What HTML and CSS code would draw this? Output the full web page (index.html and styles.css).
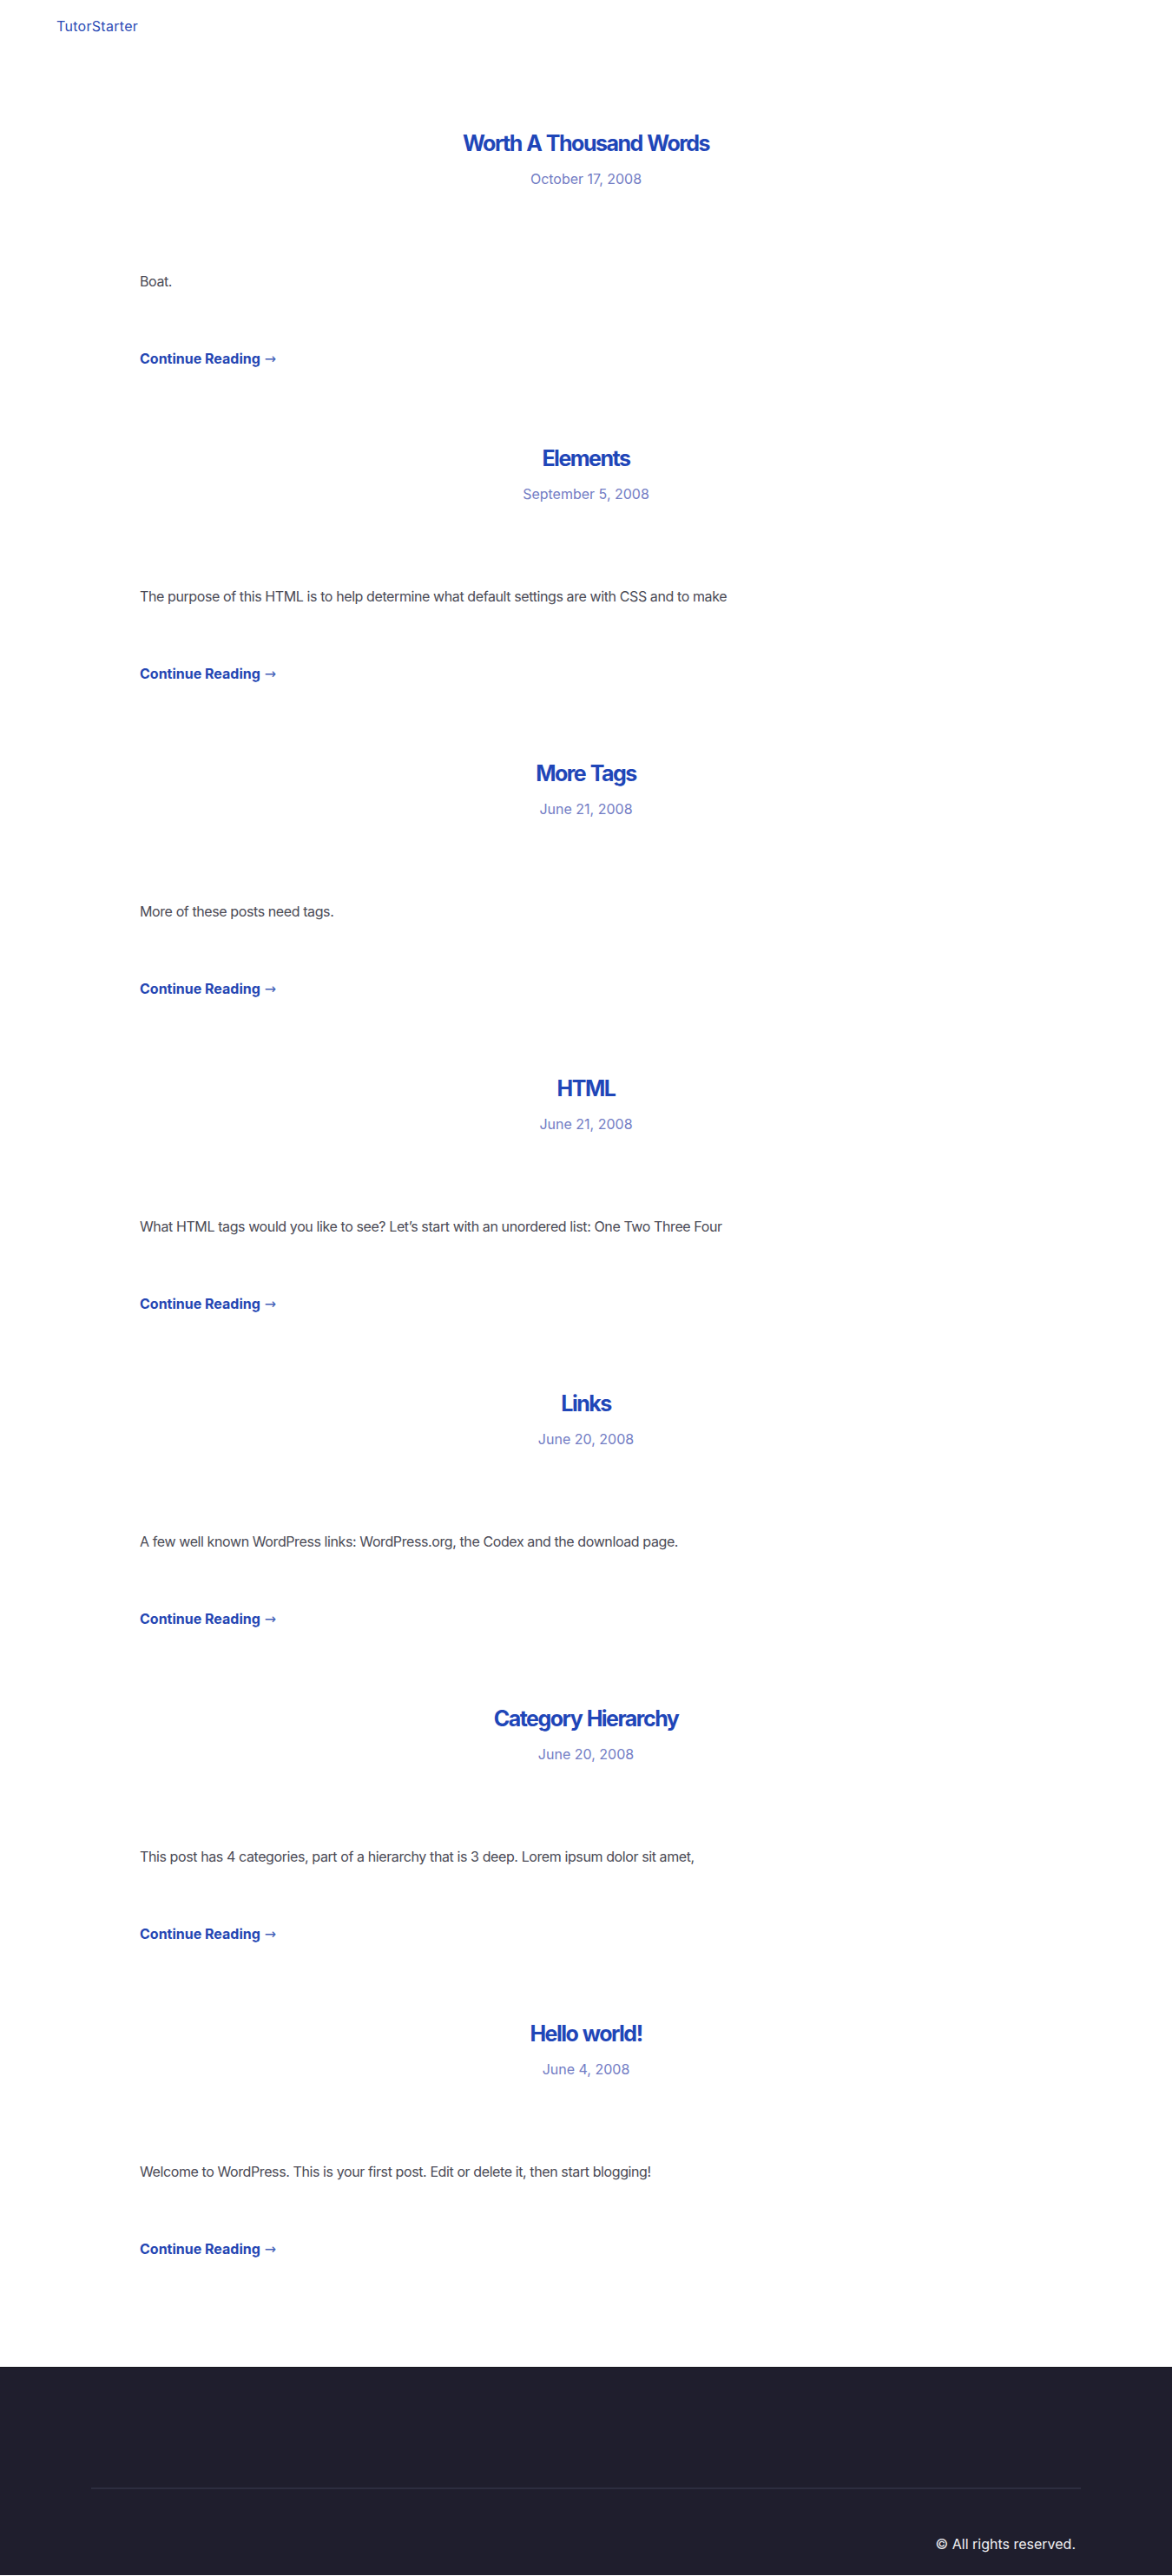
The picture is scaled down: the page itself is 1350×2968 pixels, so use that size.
FILE: index.html
```html
<!DOCTYPE html>
<html lang="en">
<head>
<meta charset="utf-8">
<title>TutorStarter</title>
<link rel="stylesheet" href="styles.css">
</head>
<body>
<header class="site-header">
  <a class="brand" href="#">TutorStarter</a>
</header>
<main class="posts">
  <article class="post">
    <h2 class="post-title"><a href="#">Worth A Thousand Words</a></h2>
    <div class="post-date">October 17, 2008</div>
    <p class="post-excerpt">Boat.</p>
    <a class="read-more" href="#">Continue Reading <span class="arrow">&rarr;</span></a>
  </article>
  <article class="post">
    <h2 class="post-title"><a href="#">Elements</a></h2>
    <div class="post-date">September 5, 2008</div>
    <p class="post-excerpt">The purpose of this HTML is to help determine what default settings are with CSS and to make</p>
    <a class="read-more" href="#">Continue Reading <span class="arrow">&rarr;</span></a>
  </article>
  <article class="post">
    <h2 class="post-title"><a href="#">More Tags</a></h2>
    <div class="post-date">June 21, 2008</div>
    <p class="post-excerpt">More of these posts need tags.</p>
    <a class="read-more" href="#">Continue Reading <span class="arrow">&rarr;</span></a>
  </article>
  <article class="post">
    <h2 class="post-title"><a href="#">HTML</a></h2>
    <div class="post-date">June 21, 2008</div>
    <p class="post-excerpt">What HTML tags would you like to see? Let’s start with an unordered list: One Two Three Four</p>
    <a class="read-more" href="#">Continue Reading <span class="arrow">&rarr;</span></a>
  </article>
  <article class="post">
    <h2 class="post-title"><a href="#">Links</a></h2>
    <div class="post-date">June 20, 2008</div>
    <p class="post-excerpt">A few well known WordPress links: WordPress.org, the Codex and the download page.</p>
    <a class="read-more" href="#">Continue Reading <span class="arrow">&rarr;</span></a>
  </article>
  <article class="post">
    <h2 class="post-title"><a href="#">Category Hierarchy</a></h2>
    <div class="post-date">June 20, 2008</div>
    <p class="post-excerpt">This post has 4 categories, part of a hierarchy that is 3 deep. Lorem ipsum dolor sit amet,</p>
    <a class="read-more" href="#">Continue Reading <span class="arrow">&rarr;</span></a>
  </article>
  <article class="post">
    <h2 class="post-title"><a href="#">Hello world!</a></h2>
    <div class="post-date">June 4, 2008</div>
    <p class="post-excerpt">Welcome to WordPress. This is your first post. Edit or delete it, then start blogging!</p>
    <a class="read-more" href="#">Continue Reading <span class="arrow">&rarr;</span></a>
  </article>
</main>
<footer class="site-footer">
  <div class="footer-inner">
    <div class="footer-widgets"></div>
    <div class="footer-bottom">
      <span class="copyright">© All rights reserved.</span>
    </div>
  </div>
</footer>
</body>
</html>
```

FILE: styles.css
```css
* { box-sizing: border-box; }

html, body {
  margin: 0;
  padding: 0;
}

body {
  font-family: Inter, "Noto Sans", "Liberation Sans", sans-serif;
  font-size: 16px;
  line-height: 24px;
  color: #4a4a55;
  background: #ffffff;
}

a { text-decoration: none; }

.site-header {
  height: 60px;
  padding: 18px 0 0 65px;
}

.brand {
  color: #2c4bb5;
  font-size: 16px;
  line-height: 24px;
  letter-spacing: 0.3px;
}

.posts {
  width: 1028px;
  margin: 0 auto;
  padding: 87px 0 39px;
  display: flex;
  flex-direction: column;
}

.post {
  display: flex;
  flex-direction: column;
  padding-bottom: 85px;
}

.post-title {
  margin: 0;
  text-align: center;
  font-size: 25px;
  line-height: 36px;
  font-weight: 700;
  letter-spacing: -1.5px;
  word-spacing: 1px;
}

.post-title a {
  color: #1f46b8;
}

.post-date {
  margin-top: 11px;
  text-align: center;
  color: #727cc4;
  font-size: 16px;
  line-height: 24px;
}

.post-excerpt {
  margin: 94px 0 0;
  color: #4a4a55;
  font-size: 16px;
  line-height: 24px;
  letter-spacing: -0.4px;
}

.read-more {
  margin-top: 65px;
  align-self: flex-start;
  display: block;
  height: 24px;
  overflow: visible;
  color: #2446b3;
  font-weight: 700;
  font-size: 16px;
  line-height: 24px;
}

.arrow {
  display: inline-block;
  line-height: 16px;
  margin-left: 1px;
  font-family: "DejaVu Sans", sans-serif;
  font-weight: 400;
  font-size: 16px;
  color: #4560b8;
}

.site-footer {
  background: #1f1e2d;
  border-top: 1px solid #17161f;
  height: 240px;
}

.footer-inner {
  width: 1140px;
  margin: 0 auto;
  display: flex;
  flex-direction: column;
}

.footer-widgets {
  height: 140px;
  border-bottom: 2px solid #2d2d3f;
}

.footer-bottom {
  display: flex;
  justify-content: flex-end;
  padding: 51px 6px 0 0;
}

.copyright {
  color: #f2f2f5;
  font-size: 16px;
  line-height: 24px;
}
```
